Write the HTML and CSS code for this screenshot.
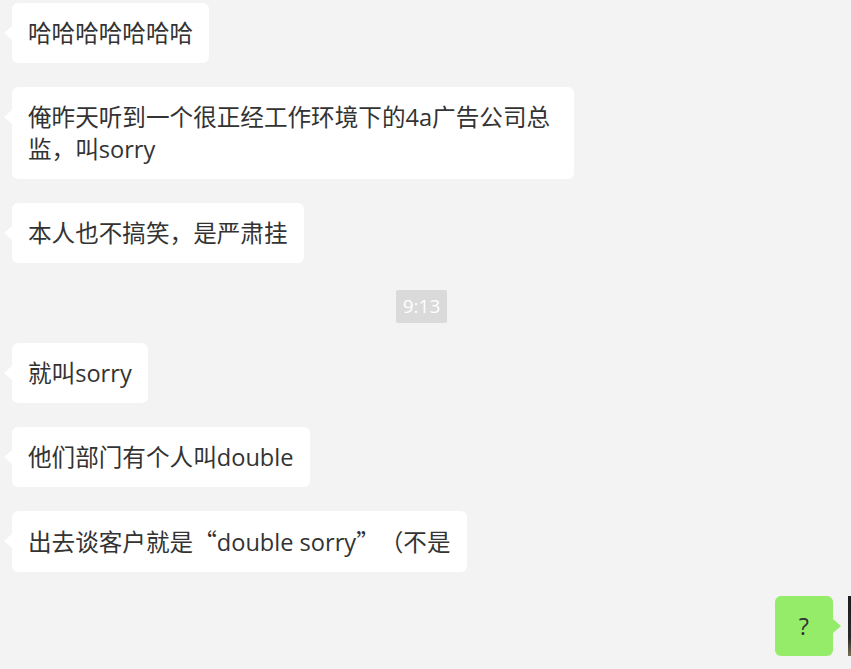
FILE: index.html
```html
<!DOCTYPE html>
<html lang="zh-CN">
<head>
    <meta charset="UTF-8">
    <meta name="viewport" content="width=device-width, initial-scale=1.0">
    <title>聊天</title>
    <link rel="stylesheet" href="styles.css">
</head>
<body>
    <div class="chat">
        <div class="row other"><div class="bubble">哈哈哈哈哈哈哈</div></div>
        <div class="row other"><div class="bubble">俺昨天听到一个很正经工作环境下的4a广告公司总监，叫sorry</div></div>
        <div class="row other"><div class="bubble">本人也不搞笑，是严肃挂</div></div>
        <div class="time"><span>9:13</span></div>
        <div class="row other"><div class="bubble">就叫sorry</div></div>
        <div class="row other"><div class="bubble">他们部门有个人叫double</div></div>
        <div class="row other"><div class="bubble">出去谈客户就是<span class="cjk">“</span>double sorry<span class="cjk">”（</span>不是</div></div>
        <div class="row self">
            <div class="bubble">?</div>
            <div class="avatar"></div>
        </div>
    </div>
</body>
</html>
```
FILE: styles.css
```css
html, body {
    margin: 0;
    padding: 0;
    background-color: #f3f3f3;
    overflow: hidden;
}
body {
    font-family: "Open Sans", "Noto Sans CJK SC", sans-serif;
    color: #333;
}
.chat {
    display: flex;
    flex-direction: column;
    gap: 24px;
    padding: 3px 0 20px 12px;
}
.row {
    display: flex;
    align-items: flex-start;
}
.row.self {
    justify-content: flex-end;
    gap: 15px;
    margin-right: -37px;
}
.bubble {
    position: relative;
    background-color: #fff;
    border-radius: 6px;
    padding: 14px 16px;
    font-size: 23.6px;
    line-height: 32px;
    max-width: 530px;
    text-spacing-trim: space-all;
}
.cjk {
    font-family: "Noto Sans CJK SC", sans-serif;
}
.other .bubble::before {
    content: "";
    position: absolute;
    left: -8px;
    top: 23px;
    border-style: solid;
    border-width: 7px 8px 7px 0;
    border-color: transparent #fff transparent transparent;
}
.self .bubble {
    background-color: #95ec69;
    padding: 14px 24px;
}
.self .bubble::after {
    content: "";
    position: absolute;
    right: -8px;
    top: 23px;
    border-style: solid;
    border-width: 7px 0 7px 8px;
    border-color: transparent transparent transparent #95ec69;
}
.avatar {
    width: 40px;
    height: 60px;
    background: linear-gradient(#1c1c1c 0%, #2a2a2a 70%, #7a6d55 100%);
}
.time {
    display: flex;
    justify-content: center;
    padding-right: 20px;
    margin: 3px 0 -4px;
}
.time span {
    background-color: #dadada;
    color: #fff;
    font-size: 19px;
    line-height: 33px;
    padding: 0 7px;
    border-radius: 2px;
}
```
